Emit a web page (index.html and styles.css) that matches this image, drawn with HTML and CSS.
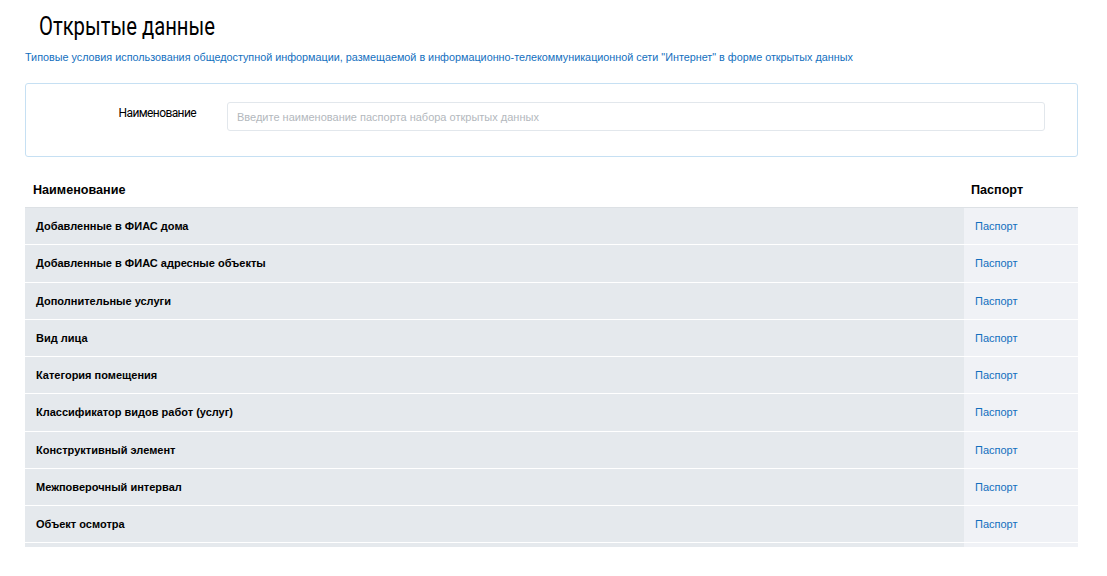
FILE: index.html
```html
<!DOCTYPE html>
<html lang="ru">
<head>
    <meta charset="UTF-8">
    <meta name="viewport" content="width=device-width, initial-scale=1.0">
    <title>Открытые данные</title>
    <link rel="stylesheet" href="styles.css">
</head>
<body>
    <div class="page">
        <div class="title-wrap">
            <h1 class="title">Открытые данные</h1>
        </div>
        <a class="terms" href="#">Типовые условия использования общедоступной информации, размещаемой в информационно-телекоммуникационной сети "Интернет" в форме открытых данных</a>

        <div class="filter">
            <label class="filter-label" for="name">Наименование</label>
            <input type="text" id="name" class="txtbox" placeholder="Введите наименование паспорта набора открытых данных">
        </div>

        <div class="list">
            <div class="list-head">
                <div class="col-name">Наименование</div>
                <div class="col-pass">Паспорт</div>
            </div>
            <div class="list-body">
                <div class="row"><div class="col-name">Добавленные в ФИАС дома</div><div class="col-pass"><a href="#">Паспорт</a></div></div>
                <div class="row"><div class="col-name">Добавленные в ФИАС адресные объекты</div><div class="col-pass"><a href="#">Паспорт</a></div></div>
                <div class="row"><div class="col-name">Дополнительные услуги</div><div class="col-pass"><a href="#">Паспорт</a></div></div>
                <div class="row"><div class="col-name">Вид лица</div><div class="col-pass"><a href="#">Паспорт</a></div></div>
                <div class="row"><div class="col-name">Категория помещения</div><div class="col-pass"><a href="#">Паспорт</a></div></div>
                <div class="row"><div class="col-name">Классификатор видов работ (услуг)</div><div class="col-pass"><a href="#">Паспорт</a></div></div>
                <div class="row"><div class="col-name">Конструктивный элемент</div><div class="col-pass"><a href="#">Паспорт</a></div></div>
                <div class="row"><div class="col-name">Межповерочный интервал</div><div class="col-pass"><a href="#">Паспорт</a></div></div>
                <div class="row"><div class="col-name">Объект осмотра</div><div class="col-pass"><a href="#">Паспорт</a></div></div>
                <!-- next row, scrolled out of view -->
                <div class="row"><div class="col-name"></div><div class="col-pass"></div></div>
            </div>
        </div>
    </div>
</body>
</html>
```

FILE: styles.css
```css
*{
    box-sizing: border-box;
}

body{
    margin: 0;
    background: #fff;
    font-family: "Liberation Sans", Arial, sans-serif;
    color: #000;
}

.page{
    padding: 0 29px 0 25px;
}

.title-wrap{
    height: 50px;
    padding: 13px 0 0 14px;
}

.title{
    display: inline-block;
    margin: 0;
    font-family: Roboto, "Open Sans", sans-serif;
    font-weight: 400;
    font-size: 25px;
    line-height: 28px;
    transform: scaleX(0.81);
    transform-origin: left center;
}

.terms{
    display: block;
    font-size: 10.8px;
    line-height: 14px;
    color: #136fbe;
    text-decoration: none;
}

.filter{
    margin-top: 19px;
    height: 74px;
    border: 1px solid #c6e0f3;
    border-radius: 3px;
    padding: 18px 32px 0 0;
    display: grid;
    grid-template-columns: 170px 1fr;
    column-gap: 31px;
    align-items: start;
}

.filter-label{
    text-align: right;
    padding-top: 4px;
    font-family: Roboto, sans-serif;
    font-size: 12px;
    line-height: 14px;
    letter-spacing: -0.6px;
}

.txtbox{
    height: 29px;
    width: 100%;
    border: 1px solid #e2e7ec;
    border-radius: 3px;
    outline: none;
    padding: 0 9px;
    font-family: "Liberation Sans", Arial, sans-serif;
    font-size: 11px;
}

.txtbox::placeholder{
    color: #b3b8bd;
}

.list{
    margin-top: 16px;
}

.list-head{
    display: flex;
    height: 35px;
    align-items: center;
    border-bottom: 1px solid #dde1e5;
    font-size: 12.6px;
    font-weight: bold;
}

.list-head .col-name{
    flex: 1;
    padding-left: 8px;
}

.list-head .col-pass{
    width: 114px;
    padding-left: 7px;
}

.list-body{
    height: 339px;
    overflow: hidden;
}

.row{
    display: flex;
    height: 37.25px;
    border-bottom: 1px solid #fff;
    font-size: 11px;
}

.row .col-name{
    flex: 1;
    display: flex;
    align-items: center;
    padding-left: 11px;
    font-weight: bold;
    background: #e5e9ed;
}

.row .col-pass{
    width: 114px;
    display: flex;
    align-items: center;
    padding-left: 11px;
    background: #f0f2f6;
}

.row a{
    color: #136fbe;
    text-decoration: none;
}
```
